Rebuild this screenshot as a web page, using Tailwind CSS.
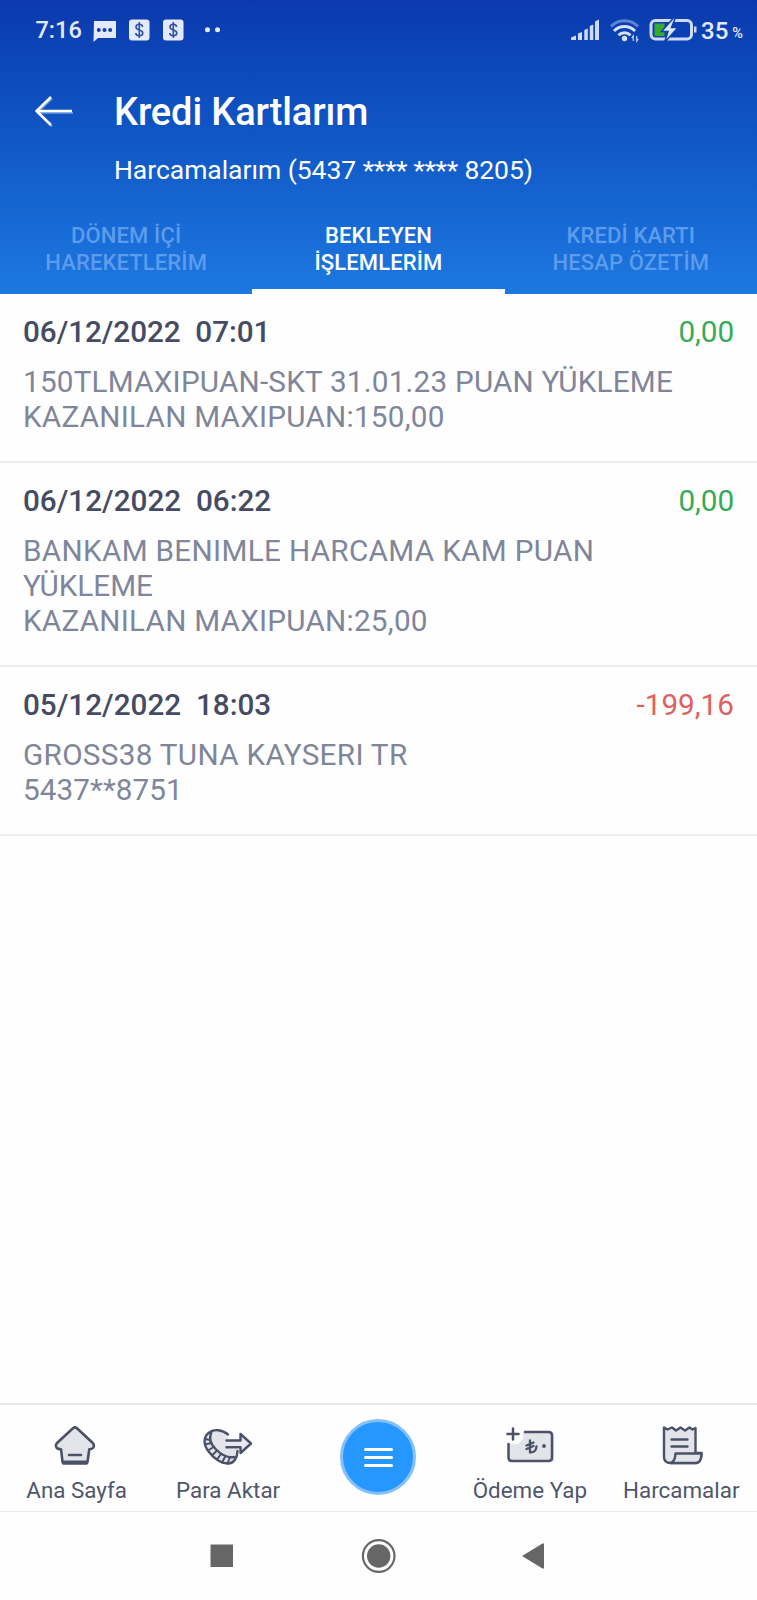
<!DOCTYPE html>
<html lang="tr">
<head>
<meta charset="utf-8">
<title>Kredi Kartlarım</title>
<script src="https://cdn.jsdelivr.net/npm/@tailwindcss/browser@4"></script>
</head>
<body class="bg-white">
<div class="w-[757px] h-[1600px] flex flex-col overflow-hidden bg-[#fefefe]" style="font-family: Roboto, 'Liberation Sans', sans-serif">
  <header class="h-[294px] shrink-0 flex flex-col bg-linear-to-b from-[#0b39ad] to-[#1e78e1] text-white">
    <div class="h-[60px] shrink-0 flex items-center pl-[35.500px] text-[#e4eafb]">
      <span class="text-[23.500px] font-medium w-[57.500px] whitespace-nowrap pt-[2px]">7:16</span>
      <svg class="w-[130px] h-[24px] shrink-0" viewBox="93 18 130 24">
        <path fill="currentColor" d="M94 21h22v17h-18l-4.500 4z"/>
        <g fill="#0f40b0"><circle cx="98.800" cy="30" r="2"/><circle cx="104.500" cy="30" r="2"/><circle cx="110.200" cy="30" r="2"/></g>
        <rect x="129" y="19.500" width="20.500" height="21" rx="3" fill="currentColor"/>
        <rect x="163" y="19.500" width="20.500" height="21" rx="3" fill="currentColor"/>
        <g fill="none" stroke="#2c51a8" stroke-width="1.600">
          <path id="usd" d="M139.300 22v16M142.500 27c0-1.800-1.500-2.700-3.200-2.700s-3.300.9-3.300 2.700 1.600 2.500 3.300 3 3.500 1.200 3.500 3-1.600 2.800-3.500 2.800-3.500-1-3.500-2.800"/>
          <use href="#usd" x="34"/>
        </g>
        <circle cx="207.500" cy="29.700" r="2.500" fill="currentColor"/><circle cx="217.500" cy="29.700" r="2.500" fill="currentColor"/>
      </svg>
      <svg class="w-[131px] h-[28px] shrink-0 ml-[347px]" viewBox="570 16 131 28">
        <path fill="#cfdaf8" d="M571 40v-2.500l5-2v4.500zM578 40v-6.500l4-1.500v8zM584.300 40v-10l3.500-1.500v11.500zM589.800 40v-14l3.500-1.500v15.500zM595 40v-18.500l4-2v20.500z"/>
        <g fill="none" stroke-width="3">
          <path stroke="#5f84d6" d="M611 26.500a19 19 0 0 1 27 0"/>
          <path stroke="#d8e1fa" d="M614 31a14.500 14.500 0 0 1 21 0M618.500 35.200a8.500 8.500 0 0 1 12 0"/>
        </g>
        <circle cx="624.500" cy="38.500" r="2.700" fill="#d8e1fa"/>
        <path d="M633.300 41v-5l-1.500 2M636.700 36v5l1.500-2" fill="none" stroke="#b4c6f2" stroke-width="1.300"/>
        <rect x="651" y="20.500" width="40.500" height="18.500" rx="4.500" fill="none" stroke="#cfdaf8" stroke-width="3"/>
        <path fill="#37a92c" d="M654.500 23.500h10v12.500h-10z"/>
        <path fill="#dfe7fc" stroke="#0f40b0" stroke-width="1.500" d="M674 17.500l-12.500 14h6.500l-3.500 11 13.500-15h-6.500l4-10z"/>
        <path fill="#cfdaf8" d="M694 26.500h2.500v6H694z"/>
      </svg>
      <span class="text-[24px] font-medium leading-none pt-[2px]">35</span>
      <span class="text-[14.500px] font-medium leading-none pl-[4px] pt-[8px]">%</span>
    </div>
    <div class="flex h-[152px] shrink-0 pl-[35px]">
      <svg class="w-[38px] h-[34px] mt-[34px] shrink-0" viewBox="35 94 38 34" fill="none">
        <path d="M52 98.500l-14.500 14 14.500 14M39 112.800h34" stroke="#6d97de" stroke-width="2"/>
        <path d="M51 97l-14.500 14 14.500 14M37 111h35" stroke="#fff" stroke-width="2.500"/>
      </svg>
      <div class="pl-[41px] pt-[30px]">
        <h1 class="text-[38px] leading-[45px] tracking-[-0.120px] font-medium w-fit whitespace-nowrap">Kredi Kartlarım</h1>
        <p class="text-[26.500px] leading-[32px] mt-[19px] tracking-[-0.040px] w-fit whitespace-nowrap">Harcamalarım (5437 <span class="tracking-[-0.300px]">**** ****</span> 8205)</p>
      </div>
    </div>
    <nav class="flex-1 grid grid-cols-3 text-center text-[22px] leading-[26.500px] tracking-[0.120px] font-medium text-[#5c9ceb]">
      <div class="pt-[11px]">DÖNEM İÇİ<br>HAREKETLERİM</div>
      <div class="pt-[11px] h-[82px] border-b-[5px] border-white text-white">BEKLEYEN<br>İŞLEMLERİM</div>
      <div class="pt-[11px]">KREDİ KARTI<br>HESAP ÖZETİM</div>
    </nav>
  </header>

  <main class="flex-1 text-[29.700px] leading-[35px] text-[#80869a]">
    <section class="border-b-2 border-[#ededed] px-[23px] pt-5 pb-[27px]">
      <div class="flex justify-between mb-[15px]"><span class="font-medium text-[#454b63] tracking-[-0.050px] whitespace-pre">06/12/2022  07:01</span><span class="text-[#36ab59] tracking-[-0.100px]">0,00</span></div>
      <p><span class="tracking-[0.210px]">150TLMAXIPUAN-SKT 31.01.23 PUAN YÜKLEME</span><br><span class="tracking-[0.240px]">KAZANILAN MAXIPUAN:150,00</span></p>
    </section>
    <section class="border-b-2 border-[#ededed] px-[23px] pt-5 pb-[27px]">
      <div class="flex justify-between mb-[15px]"><span class="font-medium text-[#454b63] whitespace-pre">06/12/2022  06:22</span><span class="text-[#36ab59] tracking-[-0.100px]">0,00</span></div>
      <p><span class="tracking-[0.320px]">BANKAM BENIMLE HARCAMA KAM PUAN</span><br>YÜKLEME<br><span class="tracking-[0.240px]">KAZANILAN MAXIPUAN:25,00</span></p>
    </section>
    <section class="border-b-2 border-[#ededed] px-[23px] pt-5 pb-[27px]">
      <div class="flex justify-between mb-[15px]"><span class="font-medium text-[#454b63] whitespace-pre">05/12/2022  18:03</span><span class="text-[#e0605f]">-199,16</span></div>
      <p><span class="tracking-[0.310px]">GROSS38 TUNA KAYSERI TR</span><br><span class="tracking-[0.080px]">5437**8751</span></p>
    </section>
  </main>

  <nav class="h-[109px] shrink-0 border-t-2 border-[#ebebeb] border-b border-b-[#ececec] grid grid-cols-5 text-[22.400px] leading-[27px] text-[#50566b] whitespace-nowrap">
    <div class="flex flex-col items-center pt-[19px]">
      <svg class="w-[42px] h-[42px] -ml-[2px]" viewBox="54 1424 42 42" stroke="#4b5168" stroke-width="2.600" stroke-linejoin="round" stroke-linecap="round">
        <path fill="#e3e4ea" d="M73 1428.200q2-1.600 4 0l15.500 14.500q2.500 2.600.5 5.300-1 1.200-3.700 1.200l-1.800 12.500q-.3 1.800-2 1.800h-21q-1.700 0-2-1.800l-1.500-12.500q-3 0-4.200-1.200-2-2.700.5-5.300z"/>
        <path d="M63.500 1461.800h23.500M69 1455h12"/>
      </svg>
      <span class="mt-[11px] ml-[2px]">Ana Sayfa</span>
    </div>
    <div class="flex flex-col items-center pt-[19px]">
      <svg class="w-[50px] h-[42px] ml-[2px]" viewBox="203 1424 50 42" fill="none" stroke="#4b5168" stroke-width="2.400" stroke-linejoin="round" stroke-linecap="round">
        <path fill="#e3e4ea" stroke="none" d="M211 1432q8-5 17 5v12h10q-1 14-11 14-10-2-19-13-6-12 3-18z"/>
        <path d="M228 1434.500c-6-5-14-5.500-18-2.500-7 4-7 13-1 20 6 8 14 12 20 11.500 5-.5 8.500-6 8.500-12.500M211.500 1432c-3 6-1 12 4 17 6 6 13 9 18.500 8"/>
        <path stroke-width="2" d="M205.500 1439l4.500 1M205 1444.500l6-1.500M208 1450.500l5.500-3.500M212 1455.500l5-5M217 1459.500l4-5.500M222 1462.500l3.500-6.500M227.500 1463.500l2.500-6.500"/>
        <path d="M226.500 1440.500h14v-6.500l10.500 9.500-10.500 9.500v-5.700h-14" fill="#e8e9ee"/>
      </svg>
      <span class="mt-[11px] ml-[2px]">Para Aktar</span>
    </div>
    <div class="flex justify-center pt-[14px]">
      <div class="w-[76px] h-[76px] rounded-full border-[3.500px] border-[#84c1fa] bg-[#2697ff] flex flex-col items-center justify-center gap-[5px]">
        <i class="w-[29px] h-[3px] rounded-full bg-white"></i><i class="w-[29px] h-[3px] rounded-full bg-white"></i><i class="w-[29px] h-[3px] rounded-full bg-white"></i>
      </div>
    </div>
    <div class="flex flex-col items-center pt-[19px]">
      <svg class="w-[50px] h-[42px]" viewBox="506 1424 50 42" fill="none" stroke="#4b5168" stroke-width="2.500" stroke-linecap="round" stroke-linejoin="round">
        <path fill="#e3e4ea" stroke="none" d="M524 1432h31v30h-46v-18h10l5-5z"/>
        <path d="M526 1432h23.500q3.500 0 3.500 3.500v22q0 3.500-3.500 3.500h-36q-4 0-4-3.500V1444M508.500 1434h11M514 1428.500v11"/>
        <path stroke-width="2.300" d="M531 1440.500v12q6 0 6.500-6M527.500 1445.500l7-3M527.500 1449l7-3"/>
        <circle cx="545" cy="1446" r="1.900" fill="#4b5168" stroke="none"/>
      </svg>
      <span class="mt-[11px]">Ödeme Yap</span>
    </div>
    <div class="flex flex-col items-center pt-[19px]">
      <svg class="w-[42px] h-[42px] ml-[3px]" viewBox="662 1424 42 42" fill="#e3e4ea" stroke="#4b5168" stroke-width="2.400" stroke-linecap="round" stroke-linejoin="round">
        <path d="M664 1427.500l3.500 2 4.500-2 4 3 4.500-3 4.500 3 4.500-3 3 2 3-1.500v25h6q0 8-5 10h-26q-6.500 0-6.500-6z"/>
        <path d="M675.500 1453.500h26q0 9.500-6 9.500h-25q4.500-1 5-9.500zM671.500 1439.500h16M671.500 1446.500h16"/>
      </svg>
      <span class="mt-[11px]">Harcamalar</span>
    </div>
  </nav>

  <div class="h-[88px] shrink-0">
    <svg class="w-[757px] h-[88px]" viewBox="0 1512 757 88" fill="#666">
      <path d="M210.500 1544.500h22.500v22.500h-22.500zM522 1556l20.500-12.500h1.500v25h-1.500z"/>
      <circle cx="378.700" cy="1556" r="11.700"/><circle cx="378.700" cy="1556" r="15.800" fill="none" stroke="#666" stroke-width="2.200"/>
    </svg>
  </div>
</div>
</body>
</html>
